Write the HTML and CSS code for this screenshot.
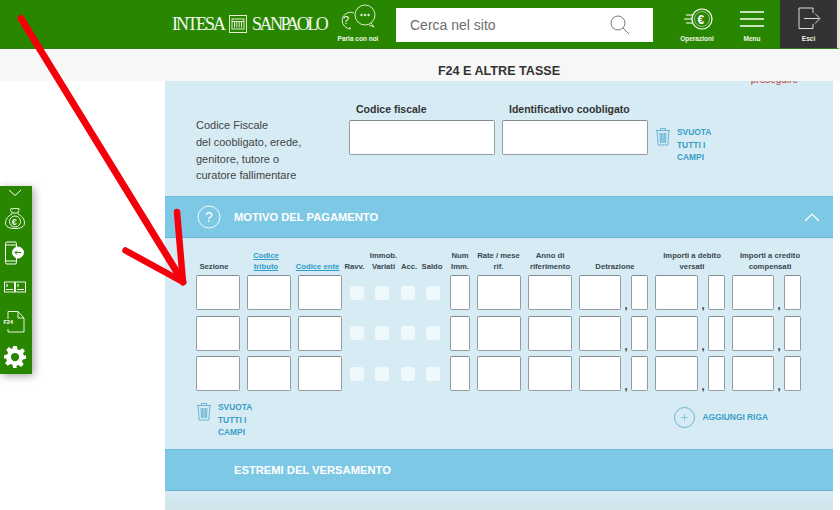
FILE: index.html
```html
<!DOCTYPE html>
<html lang="it">
<head>
  <meta charset="UTF-8">
  <meta name="viewport" content="width=device-width, initial-scale=1.0">
  <title>F24 e altre tasse</title>
  <link rel="stylesheet" href="styles.css">
</head>
<body>
  <header class="topbar">
    <div class="logo">
      <span class="logo-word">INTESA</span>
      <svg class="logo-mark" width="18" height="18" viewBox="0 0 18 18" fill="none" stroke="#dff0d4" stroke-width="1">
        <rect x="0.5" y="0.5" width="17" height="17"></rect>
        <rect x="3" y="4" width="12" height="10"></rect>
        <path d="M3 6.500h12M5.500 6.500v6M7.800 6.500v6M10.200 6.500v6M12.500 6.500v6"></path>
      </svg>
      <span class="logo-word logo-word-long">SANPAOLO</span>
    </div>
    <div class="nav-item nav-chat">
      <svg width="40" height="30" viewBox="0 0 40 30" fill="none" stroke="#fff" stroke-width="0.8">
        <path d="M16 9a8 8 0 1 0-7 15c1 .5 2 1 3.500 1-.5-.7-.8-1.300-.8-2"></path>
        <text x="5" y="20" class="chat-mark">?</text>
        <circle cx="27" cy="11" r="10"></circle>
        <path d="M33 19l3 4-5-2"></path>
        <circle cx="23.500" cy="11" r="0.8" fill="#fff"></circle>
        <circle cx="27" cy="11" r="0.8" fill="#fff"></circle>
        <circle cx="30.500" cy="11" r="0.8" fill="#fff"></circle>
      </svg>
      <span class="nav-label">Parla con noi</span>
    </div>
    <div class="search">
      <span class="search-text">Cerca nel sito</span>
      <svg width="20" height="20" viewBox="0 0 20 20" fill="none" stroke="#777" stroke-width="1">
        <circle cx="8" cy="8" r="7"></circle>
        <path d="M13 13l6 6"></path>
      </svg>
    </div>
    <div class="nav-item nav-ops">
      <svg width="36" height="30" viewBox="0 0 36 30" fill="none" stroke="#fff" stroke-width="1.200">
        <circle cx="23" cy="15" r="10"></circle>
        <circle cx="23" cy="15" r="7.500" stroke-width="0.500"></circle>
        <path d="M7 11h7M5 15h8M7 19h7"></path>
        <text x="18.500" y="19.500" class="ops-mark">€</text>
      </svg>
      <span class="nav-label">Operazioni</span>
    </div>
    <div class="nav-item nav-menu">
      <svg width="26" height="30" viewBox="0 0 26 30" fill="none" stroke="#fff" stroke-width="1.300">
        <path d="M1 8h24M1 15h24M1 22h24"></path>
      </svg>
      <span class="nav-label">Menu</span>
    </div>
    <div class="nav-item nav-exit">
      <svg width="26" height="30" viewBox="0 0 26 30" fill="none" stroke="#ddd" stroke-width="1">
        <path d="M17 9V4H3v20.500h14V20"></path>
        <path d="M8 14.500h15M19 9.500l5 5-5 5"></path>
      </svg>
      <span class="nav-label">Esci</span>
    </div>
  </header>

  <div class="title-bar">
    <h1 class="page-title">F24 E ALTRE TASSE</h1>
  </div>

  <main class="panel">
    <section class="coobligato">
      <p class="notice">proseguire</p>
      <div class="coobligato-row">
        <p class="coobligato-text">Codice Fiscale<br>del coobligato, erede,<br>genitore, tutore o<br>curatore fallimentare</p>
        <div class="big-field">
          <label class="big-label">Codice fiscale</label>
          <input class="field big-input" type="text">
        </div>
        <div class="big-field">
          <label class="big-label">Identificativo coobligato</label>
          <input class="field big-input" type="text">
        </div>
        <div class="clear-fields clear-top">
          <svg class="trash" width="16" height="19" viewBox="0 0 16 19" fill="none" stroke="#4ea6cb" stroke-width="0.800">
            <path d="M1 3.500h14M5.500 3.500V1.500h5v2M2 3.500l1.200 14.500h9.600L14 3.500"></path>
            <path d="M5 6l.5 10M8 6v10M11 6l-.5 10M6.500 6l.3 10M9.500 6l-.3 10"></path>
          </svg>
          <span class="clear-text">SVUOTA<br>TUTTI I<br>CAMPI</span>
        </div>
      </div>
    </section>

    <div class="band">
      <svg class="band-help" width="24" height="24" viewBox="0 0 24 24" fill="none" stroke="#fff" stroke-width="0.900">
        <circle cx="12" cy="12" r="11"></circle>
        <text x="8" y="17" class="help-mark">?</text>
      </svg>
      <h2 class="band-title">MOTIVO DEL PAGAMENTO</h2>
      <svg class="band-chevron" width="16" height="10" viewBox="0 0 16 10" fill="none" stroke="#fff" stroke-width="1.200">
        <path d="M1 9l7-7 7 7"></path>
      </svg>
    </div>

    <section class="payment">
      <div class="f24-row f24-labels">
        <span class="col-label">Sezione</span>
        <a class="col-label col-link">Codice<br>tributo</a>
        <a class="col-label col-link">Codice ente</a>
        <span class="col-label">Ravv.</span>
        <span class="col-label">Immob.<br>Variati</span>
        <span class="col-label">Acc.</span>
        <span class="col-label">Saldo</span>
        <span class="col-label">Num<br>Imm.</span>
        <span class="col-label">Rate / mese<br>rif.</span>
        <span class="col-label">Anno di<br>riferimento</span>
        <span class="col-label">Detrazione</span>
        <span class="col-label">Importi a debito<br>versati</span>
        <span class="col-label">Importi a credito<br>compensati</span>
      </div>

      <div class="f24-row">
        <input class="field" type="text">
        <input class="field" type="text">
        <input class="field" type="text">
        <span class="check"></span>
        <span class="check"></span>
        <span class="check"></span>
        <span class="check"></span>
        <input class="field" type="text">
        <input class="field" type="text">
        <input class="field" type="text">
        <div class="amount"><input class="field" type="text"><span class="comma">,</span><input class="field" type="text"></div>
        <div class="amount"><input class="field" type="text"><span class="comma">,</span><input class="field" type="text"></div>
        <div class="amount"><input class="field" type="text"><span class="comma">,</span><input class="field" type="text"></div>
      </div>
      <div class="f24-row">
        <input class="field" type="text">
        <input class="field" type="text">
        <input class="field" type="text">
        <span class="check"></span>
        <span class="check"></span>
        <span class="check"></span>
        <span class="check"></span>
        <input class="field" type="text">
        <input class="field" type="text">
        <input class="field" type="text">
        <div class="amount"><input class="field" type="text"><span class="comma">,</span><input class="field" type="text"></div>
        <div class="amount"><input class="field" type="text"><span class="comma">,</span><input class="field" type="text"></div>
        <div class="amount"><input class="field" type="text"><span class="comma">,</span><input class="field" type="text"></div>
      </div>
      <div class="f24-row">
        <input class="field" type="text">
        <input class="field" type="text">
        <input class="field" type="text">
        <span class="check"></span>
        <span class="check"></span>
        <span class="check"></span>
        <span class="check"></span>
        <input class="field" type="text">
        <input class="field" type="text">
        <input class="field" type="text">
        <div class="amount"><input class="field" type="text"><span class="comma">,</span><input class="field" type="text"></div>
        <div class="amount"><input class="field" type="text"><span class="comma">,</span><input class="field" type="text"></div>
        <div class="amount"><input class="field" type="text"><span class="comma">,</span><input class="field" type="text"></div>
      </div>

      <div class="payment-actions">
        <div class="clear-fields">
          <svg class="trash" width="16" height="19" viewBox="0 0 16 19" fill="none" stroke="#4ea6cb" stroke-width="0.800">
            <path d="M1 3.500h14M5.500 3.500V1.500h5v2M2 3.500l1.200 14.500h9.600L14 3.500"></path>
            <path d="M5 6l.5 10M8 6v10M11 6l-.5 10M6.500 6l.3 10M9.500 6l-.3 10"></path>
          </svg>
          <span class="clear-text">SVUOTA<br>TUTTI I<br>CAMPI</span>
        </div>
        <div class="add-row">
          <svg width="21" height="21" viewBox="0 0 21 21" fill="none" stroke="#4ea6cb" stroke-width="0.800">
            <circle cx="10.500" cy="10.500" r="10"></circle>
            <path d="M7 10.500h7M10.500 7v7" stroke-width="0.500"></path>
          </svg>
          <span class="clear-text">AGGIUNGI RIGA</span>
        </div>
      </div>
    </section>

    <div class="band">
      <h2 class="band-title band-title-plain">ESTREMI DEL VERSAMENTO</h2>
    </div>
    <div class="panel-end"></div>
  </main>

  <aside class="toolbar">
    <svg class="tool-chevron" width="14" height="8" viewBox="0 0 14 8" fill="none" stroke="#fff" stroke-width="1">
      <path d="M1 1l6 5.500L13 1"></path>
    </svg>
    <svg class="tool-bag" width="20" height="22" viewBox="0 0 20 22" fill="none" stroke="#fff" stroke-width="0.900">
      <path d="M7 6C6 4 5 3 6 1.500c1.500 1 2.500-.5 4 0 1.500-.5 2.500.5 4 0 .5 1.500-.5 3-1.500 4.500"></path>
      <path d="M6.500 6h7M7 7C3 9 .5 12 .5 16c0 4 4 5.500 9.500 5.500s9.500-1.500 9.500-5.500c0-4-2.500-7-6.500-9"></path>
      <circle cx="10" cy="14.500" r="5.500"></circle>
      <text x="6.800" y="17.500" class="bag-mark">€</text>
    </svg>
    <svg class="tool-phone" width="19" height="24" viewBox="0 0 19 24" fill="none" stroke="#fff" stroke-width="1">
      <rect x="0.500" y="1" width="11" height="22" rx="1.500"></rect>
      <path d="M1 4h10M1 20h10"></path>
      <circle cx="13" cy="11.500" r="5.500" fill="#fff"></circle>
      <path d="M16 11.500h-6M12 9.500l-2 2 2 2" stroke="#298600"></path>
    </svg>
    <svg class="tool-cards" width="22" height="12" viewBox="0 0 22 12" fill="none" stroke="#fff" stroke-width="0.900">
      <rect x="0.500" y="1" width="10" height="10"></rect>
      <rect x="11.500" y="1" width="10" height="10"></rect>
      <path d="M2 8.500h7M13 8.500h7M3 3v3M14 3v3" stroke-width="1.100"></path>
    </svg>
    <div class="tool-doc">
      <svg width="20" height="22" viewBox="0 0 20 22" fill="none" stroke="#fff" stroke-width="0.900">
        <path d="M3 8V.500h10L19 7v14H3v-3"></path>
        <path d="M13 .500V7h6"></path>
      </svg>
      <span class="doc-label">F24</span>
    </div>
    <svg class="tool-gear" width="22" height="22" viewBox="0 0 24 24" fill="#fff">
      <path fill-rule="evenodd" d="M10 0h4l.7 3.500 2.300 1 3-2 2.800 2.800-2 3 1 2.300L24 10v4l-3.500.7-1 2.300 2 3-2.800 2.800-3-2-2.300 1L14 24h-4l-.7-3.500-2.300-1-3 2-2.800-2.800 2-3-1-2.300L0 14v-4l3.500-.7 1-2.300-2-3L5.300 1.200l3 2 1-.7zM12 7.500a4.500 4.500 0 1 0 0 9 4.500 4.500 0 0 0 0-9z"></path>
    </svg>
  </aside>

  <svg class="arrow" width="200" height="300" viewBox="0 0 200 300" fill="none" stroke="#f4000a" stroke-linecap="round" stroke-linejoin="round">
    <path d="M21 18.500L183 282" stroke-width="7"></path>
    <path d="M177 212l6 70L125.500 250.500" stroke-width="6.500"></path>
  </svg>
</body>
</html>
```

FILE: styles.css
```css
body {
  margin: 0;
  padding: 0;
  font-family: 'Liberation Sans', Arial, sans-serif;
  background: white;
  color: #333;
  height: 510px;
  overflow: hidden;
  position: relative;
}

.topbar {
  display: flex;
  align-items: stretch;
  height: 49px;
  padding-left: 172px;
  box-sizing: border-box;
  background: #298600;
  border-bottom: 1px solid #2f7d12;
  border-right: 3px solid #e9e8d5;
}

.logo {
  display: flex;
  flex: none;
  align-items: center;
  gap: 5px;
  width: 156px;
  color: #f2f8ee;
}

.logo-mark {
  flex: none;
}

.logo-word {
  font-family: 'Liberation Serif', serif;
  font-size: 18px;
  letter-spacing: -2px;
}

.logo-word-long {
  letter-spacing: -2.500px;
}

.nav-item {
  display: flex;
  flex: none;
  flex-direction: column;
  align-items: center;
  justify-content: flex-end;
  padding-bottom: 5px;
  box-sizing: border-box;
  width: 40px;
}

.nav-label {
  font-size: 6.500px;
  font-weight: 700;
  line-height: 9px;
  color: #eef6e8;
  white-space: nowrap;
}

.nav-chat {
  margin-left: 10px;
}

.chat-mark {
  font-size: 11px;
  fill: #fff;
  stroke: none;
}

.ops-mark {
  font-size: 12px;
  font-weight: 700;
  fill: #fff;
  stroke: none;
}

.search {
  display: flex;
  flex: none;
  align-items: center;
  justify-content: space-between;
  width: 257px;
  height: 34px;
  margin: 8px 0 0 18px;
  padding: 0 23px 0 14px;
  box-sizing: border-box;
  background: white;
}

.search-text {
  font-size: 14px;
  color: #6e6e6e;
}

.nav-ops {
  margin-left: 24px;
}

.nav-menu {
  margin-left: 15px;
}

.nav-exit {
  width: 57px;
  margin-left: 8px;
  background: #333;
}

.title-bar {
  position: relative;
  height: 32px;
  padding-left: 165px;
  background: #f7f7f7;
}

.page-title {
  width: 668px;
  margin: 0;
  padding-top: 15px;
  text-align: center;
  font-size: 12.600px;
  font-weight: 700;
  line-height: 14px;
  color: #333;
}

.panel {
  width: 668px;
  margin-left: 165px;
  background: #d6ebf4;
}

.coobligato {
  display: flow-root;
  height: 115px;
  box-sizing: border-box;
}

.notice {
  margin: -7px 0 0;
  padding-right: 35px;
  text-align: right;
  font-size: 10px;
  line-height: 12px;
  color: #b8433a;
}

.coobligato-row {
  display: flex;
  padding: 17px 0 0 31px;
}

.coobligato-text {
  width: 153px;
  margin: 14px 0 0;
  font-size: 11px;
  line-height: 16.800px;
  color: #444;
}

.big-field {
  display: flex;
  flex-direction: column;
  width: 146px;
  margin-right: 7px;
}

.big-label {
  padding-left: 7px;
  font-size: 10.500px;
  font-weight: 700;
  line-height: 12px;
  margin-bottom: 5px;
  color: #333;
  white-space: nowrap;
}

.field {
  display: block;
  width: 100%;
  min-width: 0;
  height: 35px;
  margin: 0;
  padding: 0;
  box-sizing: border-box;
  background: white;
  border: 1px solid #8f9ea3;
  border-top-color: #7f8c90;
  border-radius: 2px;
  box-shadow: 0 0 1px rgba(255, 255, 255, 0.8);
}

.clear-fields {
  display: flex;
  gap: 6px;
}

.clear-top {
  margin-top: 23px;
}

.trash {
  flex: none;
  margin-top: 1px;
}

.clear-text {
  font-size: 8.400px;
  font-weight: 700;
  line-height: 12.500px;
  color: #3a9ec6;
  white-space: nowrap;
}

.band {
  display: flex;
  align-items: center;
  height: 42px;
  box-sizing: border-box;
  background: #7dc8e5;
  border-top: 1px solid #6cbbdb;
  border-bottom: 1px solid #6cb3d3;
}

.band-help {
  margin-left: 32px;
}

.help-mark {
  font-size: 14px;
  fill: #fff;
  stroke: none;
}

.band-title {
  flex: 1;
  margin: 0 0 0 13px;
  font-size: 11.200px;
  font-weight: 700;
  color: white;
}

.band-title-plain {
  margin-left: 69px;
}

.band-chevron {
  margin-right: 13px;
}

.payment {
  height: 211px;
  box-sizing: border-box;
  padding: 12px 0 0 31px;
}

.f24-row {
  display: grid;
  grid-template-columns: 44px 44px 44px 16px 20px 17px 20px 20px 44px 44px 69px 70px 69px;
  column-gap: 7px;
  align-items: center;
  justify-items: center;
  margin-bottom: 5.500px;
}

/* header cells sit slightly off their inputs, so the row has its own widths */
.f24-labels {
  grid-template-columns: 36px 54px 35px 25px 19px 18px 14px 28px 35px 54px 62px 78px 64px;
  align-items: end;
  height: 22px;
  margin-bottom: 3px;
}

.col-label {
  font-size: 7.700px;
  font-weight: 700;
  line-height: 11px;
  text-align: center;
  color: #3b4850;
  white-space: nowrap;
}

.col-link {
  color: #2e9cc7;
  text-decoration: underline;
}

.check {
  display: block;
  width: 14px;
  height: 14px;
  background: #eff8fb;
  border-radius: 3px;
}

.amount {
  display: grid;
  grid-template-columns: 1fr 10px 17px;
  align-items: end;
  width: 100%;
}

.comma {
  font-size: 11px;
  font-weight: 700;
  line-height: 10px;
  text-align: center;
  color: #333;
}

.payment-actions {
  display: flex;
  justify-content: space-between;
  align-items: flex-start;
  padding-right: 65px;
  margin-top: 10px;
}

.add-row {
  display: flex;
  align-items: center;
  gap: 7px;
  margin-top: 6px;
}

.panel-end {
  height: 20px;
  background: linear-gradient(#d6ebf4, #d0e3ea);
}

.toolbar {
  position: absolute;
  left: 0;
  top: 186px;
  display: flex;
  flex-direction: column;
  align-items: center;
  width: 32px;
  height: 188px;
  padding: 3px 3px 0 0;
  box-sizing: border-box;
  background: #298600;
  box-shadow: 2px 2px 8px rgba(0, 0, 0, 0.35);
}

.tool-bag {
  margin-top: 10px;
}

.tool-phone {
  margin-top: 12px;
}

.tool-cards {
  margin-top: 16px;
}

.tool-doc {
  position: relative;
  width: 20px;
  height: 22px;
  margin-top: 18px;
}

.tool-gear {
  margin-top: 13px;
}

.bag-mark {
  font-size: 9px;
  font-weight: 700;
  fill: #fff;
  stroke: none;
}

.doc-label {
  position: absolute;
  left: -1px;
  top: 8px;
  font-size: 5.500px;
  font-weight: 700;
  line-height: 7px;
  color: white;
}

.arrow {
  position: absolute;
  left: 0;
  top: 0;
  pointer-events: none;
}
```
